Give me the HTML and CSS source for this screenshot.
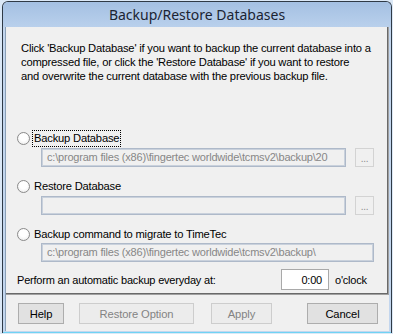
FILE: index.html
```html
<!DOCTYPE html>
<html lang="en">
	<head>
		<meta charset="UTF-8" />
		<meta name="viewport" content="width=device-width, initial-scale=1.0" />
		<title>Backup/Restore Databases</title>
		<link rel="stylesheet" href="styles.css">
	</head>
	<body>
		<div class="window">
			<div class="titleBar">Backup/Restore Databases</div>
			<div class="frame">
				<div class="client">
					<div class="panel">
						<p class="intro">
							Click 'Backup Database' if you want to backup the current database into a<br />
							compressed file, or click the 'Restore Database' if you want to restore<br />
							and overwrite the current database with the previous backup file.
						</p>

						<label class="radioRow first">
							<span class="radio"></span>
							<span class="focus">Backup Database</span>
						</label>
						<div class="fieldRow">
							<div class="field">c:\program files (x86)\fingertec worldwide\tcmsv2\backup\20</div>
							<div class="browse">...</div>
						</div>

						<label class="radioRow">
							<span class="radio"></span>
							<span>Restore Database</span>
						</label>
						<div class="fieldRow">
							<div class="field"></div>
							<div class="browse">...</div>
						</div>

						<label class="radioRow">
							<span class="radio"></span>
							<span>Backup command to migrate to TimeTec</span>
						</label>
						<div class="fieldRow tight">
							<div class="field wide">c:\program files (x86)\fingertec worldwide\tcmsv2\backup\</div>
						</div>

						<div class="autoRow">
							<span class="autoText">Perform an automatic backup everyday at:</span>
							<span class="time">0:00</span>
							<span>o'clock</span>
						</div>
					</div>

					<div class="buttons">
						<button class="btn help">Help</button>
						<button class="btn restore" disabled>Restore Option</button>
						<button class="btn apply" disabled>Apply</button>
						<button class="btn cancel">Cancel</button>
					</div>
				</div>
			</div>
		</div>
	</body>
</html>
```

FILE: styles.css
```css
* {
	padding: 0;
	margin: 0;
	box-sizing: border-box;
}
body {
	background: #dbe8f6;
	font-family: "Liberation Sans", Arial, sans-serif;
	font-size: 11px;
	letter-spacing: -0.2px;
	color: #000;
}
.window {
	margin: 1px 0 0 2px;
	width: 390px;
	height: 332px;
	border: 1px solid #2f3a46;
	border-bottom: none;
	border-radius: 6px 6px 0 0;
	background: #c3d6ee;
	display: flex;
	flex-direction: column;
	overflow: hidden;
}
.titleBar {
	height: 25px;
	line-height: 25px;
	text-align: center;
	font-family: "Noto Sans", sans-serif;
	font-size: 14px;
	letter-spacing: 0;
	color: #1b2433;
	background: linear-gradient(#a4c0e2, #b9d0ec);
}
.frame {
	flex: 1;
	padding: 0 2px 1px 2px;
	border-bottom: 1px solid #6fd3f4;
	display: flex;
}
.client {
	flex: 1;
	background: #f0f0f0;
	border-left: 1px solid #8aa0b8;
	display: flex;
	flex-direction: column;
}
.panel {
	height: 268px;
	border-right: 1px solid #a0a0a0;
	border-bottom: 1px solid #a0a0a0;
	box-shadow: inset -1px -1px 0 #696969;
}
.intro {
	padding: 14px 0 0 15px;
	line-height: 14px;
	white-space: nowrap;
	font-size: 11.2px;
}
.radioRow {
	display: flex;
	align-items: center;
	gap: 4px;
	height: 16px;
	margin-top: 11px;
	padding-left: 11px;
	font-size: 11.2px;
}
.radioRow.first {
	margin-top: 47px;
}
.radio {
	width: 13px;
	height: 13px;
	border-radius: 50%;
	border: 1px solid #8a8a8a;
	background: radial-gradient(circle at 50% 40%, #fff 40%, #e6e6e6 100%);
}
.focus {
	outline: 1px dotted #000;
	margin-left: -1px;
	padding: 0 1px;
	line-height: 15px;
}
.fieldRow {
	display: flex;
	gap: 9px;
	margin-top: 2px;
	padding-left: 35px;
}
.fieldRow.tight {
	margin-top: 1px;
}
.field {
	width: 305px;
	height: 19px;
	border: 1px solid #aeb9c9;
	box-shadow: inset 0 0 0 1px #c9d1dc;
	background: #f0f0f0;
	color: #878787;
	line-height: 17px;
	padding-left: 5px;
	white-space: nowrap;
	overflow: hidden;
}
.field.wide {
	width: 333px;
}
.browse {
	width: 19px;
	height: 19px;
	border: 1px solid #d3d3d3;
	color: #8d8d8d;
	text-align: center;
	line-height: 19px;
	font-size: 10px;
}
.autoRow {
	display: flex;
	align-items: center;
	height: 21px;
	margin-top: 7px;
	padding-left: 11px;
}
.autoText {
	width: 264px;
}
.time {
	width: 48px;
	height: 21px;
	border: 1px solid #a9a9a9;
	background: #fff;
	text-align: right;
	padding-right: 6px;
	line-height: 21px;
	margin-right: 6px;
}
.buttons {
	display: flex;
	padding: 8px 0 0 12px;
}
.btn {
	height: 21px;
	font-family: "Liberation Sans", Arial, sans-serif;
	font-size: 11.2px;
	letter-spacing: -0.1px;
	border: 1px solid #adadad;
	background: #e1e1e1;
	color: #000;
}
.btn:disabled {
	border-color: #cdcdcd;
	background: #ececec;
	color: #838383;
}
.help {
	width: 46px;
}
.restore {
	width: 115px;
	margin-left: 15px;
}
.apply {
	width: 61px;
	margin-left: 17px;
}
.cancel {
	width: 71px;
	margin-left: 35px;
}
```
